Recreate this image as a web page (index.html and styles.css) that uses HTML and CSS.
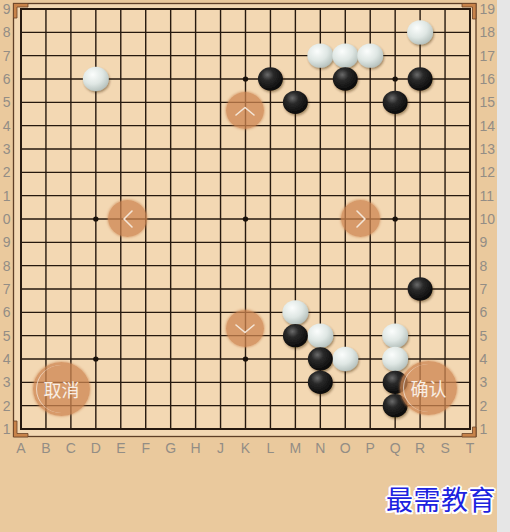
FILE: index.html
```html
<!DOCTYPE html>
<html lang="zh">
<head>
  <meta charset="UTF-8" />
  <meta name="viewport" content="width=device-width, initial-scale=1.0">
  <title>围棋 - 落子确认</title>
  <link rel="stylesheet" href="styles.css">
</head>
<body>
  <div class="screen">
    <div class="board">
      <svg width="497" height="460" viewBox="0 0 497 460">
        <defs>
          <radialGradient id="black-stone" cx="38%" cy="32%" r="70%">
            <stop offset="0%" stop-color="#6a6a6a" />
            <stop offset="35%" stop-color="#2a2a2a" />
            <stop offset="100%" stop-color="#080808" />
          </radialGradient>
          <radialGradient id="white-stone" cx="38%" cy="32%" r="72%">
            <stop offset="0%" stop-color="#fbfdfc" />
            <stop offset="55%" stop-color="#dfe7e4" />
            <stop offset="100%" stop-color="#b4c0bc" />
          </radialGradient>
          <filter id="stone-shadow" x="-50%" y="-50%" width="200%" height="200%">
            <feDropShadow dx="0.04" dy="0.07" stdDeviation="0.05" flood-color="#3a2410" flood-opacity="0.45" />
          </filter>
        </defs>

        <!-- frame -->
        <rect class="frame" x="13.5" y="3.5" width="462.5" height="433" />
        <path class="corner" d="M13.5 3.5H28V7H17V18H13.5Z" />
        <path class="corner" d="M476 3.5H462V7H472.5V19H476Z" />
        <path class="corner" d="M13.5 437H28V433.5H17V421H13.5Z" />
        <path class="corner" d="M476 437H462V433.5H472.5V427H476Z" />

        <!-- grid, in board units -->
        <g transform="translate(21 9) scale(24.944 23.333)">
          <path class="lines" vector-effect="non-scaling-stroke"
                d="M1 0V18M2 0V18M3 0V18M4 0V18M5 0V18M6 0V18M7 0V18M8 0V18M9 0V18M10 0V18M11 0V18M12 0V18M13 0V18M14 0V18M15 0V18M16 0V18M17 0V18
                   M0 1H18M0 2H18M0 3H18M0 4H18M0 5H18M0 6H18M0 7H18M0 8H18M0 9H18M0 10H18M0 11H18M0 12H18M0 13H18M0 14H18M0 15H18M0 16H18M0 17H18" />
          <rect class="edge" vector-effect="non-scaling-stroke" x="0" y="0" width="18" height="18" />

          <g class="stars">
            <circle cx="3" cy="3" r="0.11" /><circle cx="9" cy="3" r="0.11" /><circle cx="15" cy="3" r="0.11" />
            <circle cx="3" cy="9" r="0.11" /><circle cx="9" cy="9" r="0.11" /><circle cx="15" cy="9" r="0.11" />
            <circle cx="3" cy="15" r="0.11" /><circle cx="9" cy="15" r="0.11" /><circle cx="15" cy="15" r="0.11" />
          </g>

          <g filter="url(#stone-shadow)">
            <g fill="url(#white-stone)">
              <circle cx="3" cy="3" r="0.52" />
              <circle cx="12" cy="2" r="0.52" />
              <circle cx="13" cy="2" r="0.52" />
              <circle cx="14" cy="2" r="0.52" />
              <circle cx="16" cy="1" r="0.52" />
              <circle cx="11" cy="13" r="0.52" />
              <circle cx="12" cy="14" r="0.52" />
              <circle cx="13" cy="15" r="0.52" />
              <circle cx="15" cy="14" r="0.52" />
              <circle cx="15" cy="15" r="0.52" />
            </g>
            <g fill="url(#black-stone)">
              <circle cx="10" cy="3" r="0.5" />
              <circle cx="13" cy="3" r="0.5" />
              <circle cx="16" cy="3" r="0.5" />
              <circle cx="11" cy="4" r="0.5" />
              <circle cx="15" cy="4" r="0.5" />
              <circle cx="16" cy="12" r="0.5" />
              <circle cx="11" cy="14" r="0.5" />
              <circle cx="12" cy="15" r="0.5" />
              <circle cx="12" cy="16" r="0.5" />
              <circle cx="15" cy="16" r="0.5" />
              <circle cx="15" cy="17" r="0.5" />
            </g>
          </g>
        </g>

        <!-- coordinates (left column only shows the last digit, the rest runs off the view) -->
        <g class="label" text-anchor="end">
          <text x="10.5" y="9">9</text><text x="10.5" y="32.3">8</text><text x="10.5" y="55.7">7</text>
          <text x="10.5" y="79">6</text><text x="10.5" y="102.3">5</text><text x="10.5" y="125.7">4</text>
          <text x="10.5" y="149">3</text><text x="10.5" y="172.3">2</text><text x="10.5" y="195.7">1</text>
          <text x="10.5" y="219">0</text><text x="10.5" y="242.3">9</text><text x="10.5" y="265.7">8</text>
          <text x="10.5" y="289">7</text><text x="10.5" y="312.3">6</text><text x="10.5" y="335.7">5</text>
          <text x="10.5" y="359">4</text><text x="10.5" y="382.3">3</text><text x="10.5" y="405.7">2</text>
          <text x="10.5" y="429">1</text>
        </g>
        <g class="label" text-anchor="start">
          <text x="479.5" y="9">19</text><text x="479.5" y="32.3">18</text><text x="479.5" y="55.7">17</text>
          <text x="479.5" y="79">16</text><text x="479.5" y="102.3">15</text><text x="479.5" y="125.7">14</text>
          <text x="479.5" y="149">13</text><text x="479.5" y="172.3">12</text><text x="479.5" y="195.7">11</text>
          <text x="479.5" y="219">10</text><text x="479.5" y="242.3">9</text><text x="479.5" y="265.7">8</text>
          <text x="479.5" y="289">7</text><text x="479.5" y="312.3">6</text><text x="479.5" y="335.7">5</text>
          <text x="479.5" y="359">4</text><text x="479.5" y="382.3">3</text><text x="479.5" y="405.7">2</text>
          <text x="479.5" y="429">1</text>
        </g>
        <g class="label letters" text-anchor="middle">
          <text x="21" y="453">A</text><text x="45.9" y="453">B</text><text x="70.9" y="453">C</text>
          <text x="95.8" y="453">D</text><text x="120.8" y="453">E</text><text x="145.7" y="453">F</text>
          <text x="170.7" y="453">G</text><text x="195.6" y="453">H</text><text x="220.6" y="453">J</text>
          <text x="245.5" y="453">K</text><text x="270.4" y="453">L</text><text x="295.4" y="453">M</text>
          <text x="320.3" y="453">N</text><text x="345.3" y="453">O</text><text x="370.2" y="453">P</text>
          <text x="395.2" y="453">Q</text><text x="420.1" y="453">R</text><text x="445.1" y="453">S</text>
          <text x="470" y="453">T</text>
        </g>
      </svg>

      <button class="nav-btn up" aria-label="上移">
        <svg width="22" height="12" viewBox="0 0 22 12"><polyline points="2,10 11,2.5 20,10" /></svg>
      </button>
      <button class="nav-btn left" aria-label="左移">
        <svg width="12" height="20" viewBox="0 0 12 20"><polyline points="10,2 2,10 10,18" /></svg>
      </button>
      <button class="nav-btn right" aria-label="右移">
        <svg width="12" height="20" viewBox="0 0 12 20"><polyline points="2,2 10,10 2,18" /></svg>
      </button>
      <button class="nav-btn down" aria-label="下移">
        <svg width="22" height="12" viewBox="0 0 22 12"><polyline points="2,2 11,9.5 20,2" /></svg>
      </button>
      <button class="nav-btn action cancel">取消</button>
      <button class="nav-btn action confirm">确认</button>
    </div>

    <div class="brand">
      <span>最需教育</span>
    </div>
  </div>
</body>
</html>
```

FILE: styles.css
```css
* { margin: 0; padding: 0; box-sizing: border-box; }
html, body {
  height: 100%;
  overflow: hidden;
}
body {
  display: flex;
  background: #e6e6e6;
  font-family: "Liberation Sans", "Noto Sans CJK SC", sans-serif;
}
.screen {
  width: 497px;
  height: 532px;
  background: #eac99d;
  display: flex;
  flex-direction: column;
}
.board {
  position: relative;
  height: 460px;
}
.board > svg { display: block; }

.frame { fill: #f3d8b3; stroke: #5e3f27; stroke-width: 1.3; }
.corner { fill: #c8834a; stroke: #6b4327; stroke-width: 0.8; }
.lines { fill: none; stroke: #26190f; stroke-width: 1.4; }
.edge { fill: none; stroke: #26190f; stroke-width: 2; }
.stars { fill: #1a120b; }

.label {
  font-family: "Liberation Sans", sans-serif;
  font-size: 14px;
  fill: #938d85;
  dominant-baseline: central;
}
.label.letters { dominant-baseline: auto; }

.nav-btn {
  position: absolute;
  border: none;
  border-radius: 50%;
  background: rgba(205, 134, 81, 0.75);
  box-shadow: 0 0 2px 1px rgba(205, 134, 81, 0.45);
  display: flex;
  align-items: center;
  justify-content: center;
  color: #f8eee4;
  cursor: pointer;
}
.nav-btn polyline {
  fill: none;
  stroke: #f4e6d8;
  stroke-width: 1.6;
  stroke-linecap: round;
  stroke-linejoin: round;
}
.up { left: 226px; top: 92px; width: 38px; height: 37px; }
.left { left: 108px; top: 200px; width: 39px; height: 37px; }
.right { left: 341px; top: 200px; width: 39px; height: 37px; }
.down { left: 226px; top: 310px; width: 38px; height: 37px; }

.action {
  width: 57px;
  height: 54px;
  font-family: "Noto Sans CJK SC", sans-serif;
  font-size: 18px;
}
.action::before {
  content: "";
  position: absolute;
  inset: 3px;
  border-radius: 50%;
  border-left: 1.5px solid rgba(255, 255, 255, 0.6);
}
.cancel { left: 33px; top: 362px; }
.confirm { left: 400px; top: 361px; }

.brand {
  display: flex;
  justify-content: flex-end;
  padding-top: 23px;
  padding-right: 1px;
}
.brand span {
  font-family: "Noto Sans CJK SC", serif;
  font-size: 27px;
  line-height: 32px;
  letter-spacing: 0.5px;
  color: #1c22e0;
  text-shadow: 2px 0 #fff, -2px 0 #fff, 0 2px #fff, 0 -2px #fff,
    1.5px 1.5px #fff, -1.5px -1.5px #fff, 1.5px -1.5px #fff, -1.5px 1.5px #fff;
}
```
